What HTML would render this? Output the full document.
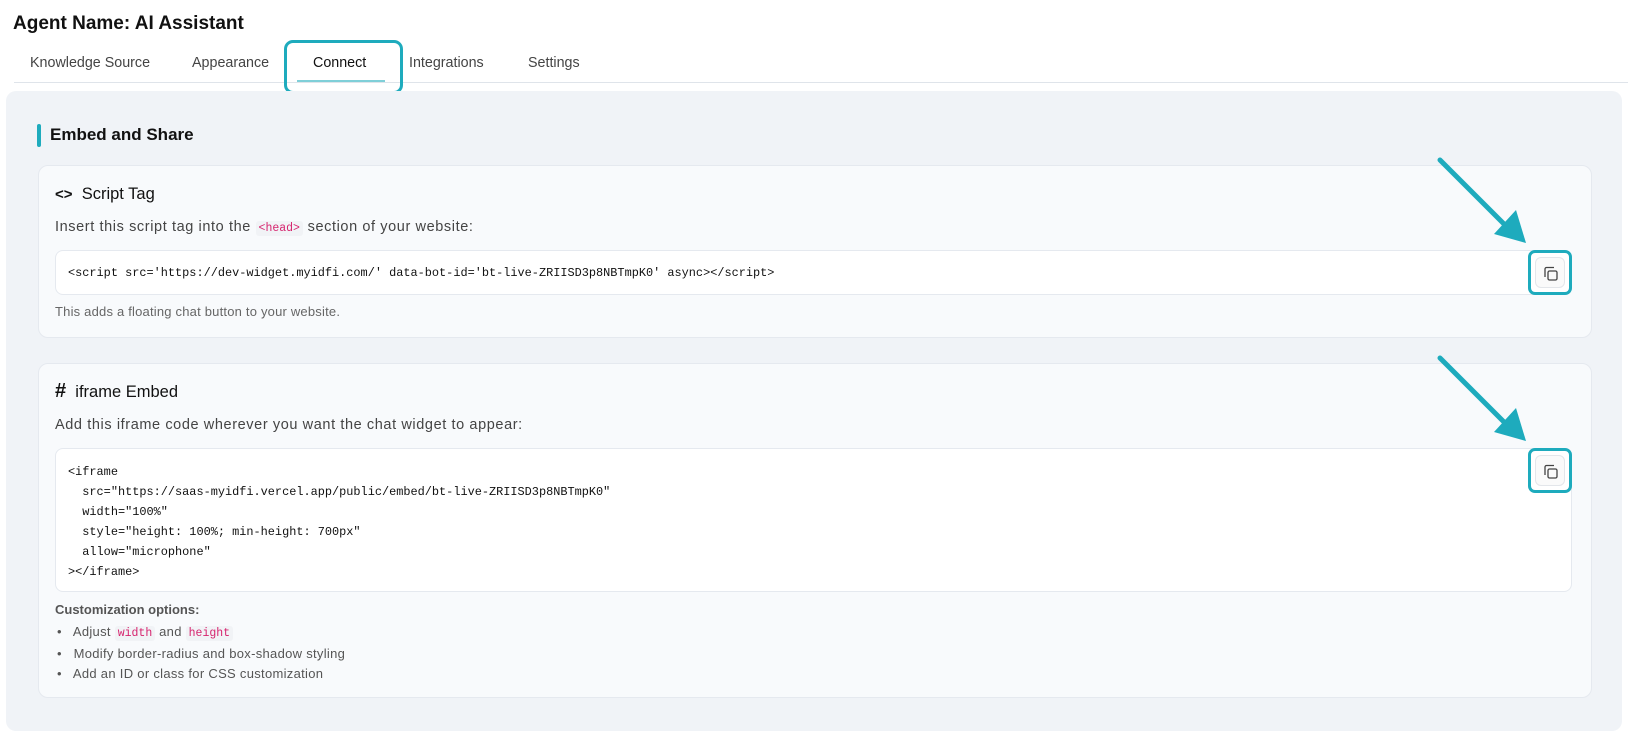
<!DOCTYPE html>
<html><head><meta charset="utf-8"><style>
*{margin:0;padding:0;box-sizing:border-box}
body{width:1628px;height:713px;overflow:hidden;background:#fff;font-family:"Liberation Sans",sans-serif;color:#111;position:relative}
.a{position:absolute;white-space:nowrap}
.tab{position:absolute;top:55px;font-size:14.3px;color:#444}
.mono{font-family:"Liberation Mono",monospace;font-size:11.9px;color:#111}
.card{position:absolute;left:38px;width:1554px;background:#f8fafc;border:1px solid #e5e9ef;border-radius:10px}
.code{position:absolute;left:55px;width:1517px;background:#fff;border:1px solid #e5e9ef;border-radius:8px}
.copy{position:absolute;left:1528px;width:44px;height:45px;border:3px solid #1eabbd;border-radius:7px;background:#fff}
.copy .in{position:absolute;left:4px;top:4px;width:30px;height:31px;border:1px solid #e3e6ea;border-radius:6px;background:#fafafa}
.pink{font-family:"Liberation Mono",monospace;color:#d6246e;background:#f1f3f6;padding:1px 3px;border-radius:3px;font-size:11.5px;letter-spacing:0}
.sm{font-size:14.5px;letter-spacing:0.6px;color:#444}
</style></head><body>
<div class="a" style="left:13px;top:13px;font-size:19px;font-weight:bold;color:#111">Agent Name: AI Assistant</div>
<div class="tab" style="left:30px">Knowledge Source</div>
<div class="tab" style="left:192px">Appearance</div>
<div class="tab" style="left:313px;color:#111">Connect</div>
<div class="tab" style="left:409px">Integrations</div>
<div class="tab" style="left:528px">Settings</div>
<div class="a" style="left:14px;top:82px;width:1614px;height:1px;background:#dfe4ea"></div>
<div class="a" style="left:297px;top:80px;width:88px;height:2px;background:#7fcfd8"></div>
<div class="a" style="left:284px;top:40px;width:119px;height:54px;border:3px solid #1eabbd;border-radius:9px"></div>
<div class="a" style="left:6px;top:91px;width:1616px;height:640px;background:#f0f3f7;border-radius:10px"></div>
<div class="a" style="left:37px;top:124px;width:4px;height:23px;background:#1eabbd;border-radius:2px"></div>
<div class="a" style="left:50px;top:125px;font-size:17px;font-weight:bold">Embed and Share</div>

<div class="card" style="top:165px;height:173px"></div>
<div class="a" style="left:55px;top:185px;font-size:16.5px"><span style="font-weight:bold;font-size:15px">&lt;&gt;</span>&nbsp; Script Tag</div>
<div class="a sm" style="left:55px;top:219px">Insert this script tag into the <span class="pink">&lt;head&gt;</span> section of your website:</div>
<div class="code" style="top:250px;height:45px"></div>
<div class="a mono" style="left:68px;top:266px">&lt;script src='https://dev-widget.myidfi.com/' data-bot-id='bt-live-ZRIISD3p8NBTmpK0' async&gt;&lt;/script&gt;</div>
<div class="a" style="left:55px;top:304px;font-size:13px;letter-spacing:0.2px;color:#666">This adds a floating chat button to your website.</div>

<div class="card" style="top:363px;height:335px"></div>
<div class="a" style="left:55px;top:383px;font-size:16.5px"><span style="font-size:20px;font-weight:bold;line-height:15px">#</span>&nbsp; iframe Embed</div>
<div class="a sm" style="left:55px;top:417px">Add this iframe code wherever you want the chat widget to appear:</div>
<div class="code" style="top:448px;height:144px"></div>
<div class="a mono" style="left:68px;top:462px;line-height:20px;white-space:pre">&lt;iframe
  src="https://saas-myidfi.vercel.app/public/embed/bt-live-ZRIISD3p8NBTmpK0"
  width="100%"
  style="height: 100%; min-height: 700px"
  allow="microphone"
&gt;&lt;/iframe&gt;</div>
<div class="a" style="left:55px;top:602px;font-size:13px;font-weight:bold;color:#555">Customization options:</div>
<div class="a" style="left:57px;top:622px;font-size:13px;letter-spacing:0.3px;line-height:20px;color:#555">•&nbsp;&nbsp; Adjust <span class="pink">width</span> and <span class="pink">height</span><br>•&nbsp;&nbsp; Modify border-radius and box-shadow styling<br>•&nbsp;&nbsp; Add an ID or class for CSS customization</div>

<div class="copy" style="top:250px"><div class="in"></div></div>
<div class="copy" style="top:448px"><div class="in"></div></div>
<svg class="a" style="left:0;top:0" width="1628" height="713">
<g fill="none" stroke="#444" stroke-width="1.3">
<rect x="1548" y="271" width="9" height="9" rx="1.5"/><path d="M1545 277 V269 a1.5 1.5 0 0 1 1.5 -1.5 H1554"/>
<rect x="1548" y="469" width="9" height="9" rx="1.5"/><path d="M1545 475 V467 a1.5 1.5 0 0 1 1.5 -1.5 H1554"/>
</g>
<g stroke="#1eabbd" stroke-width="5" stroke-linecap="round">
<line x1="1440" y1="160" x2="1506" y2="226"/>
<line x1="1440" y1="358" x2="1506" y2="424"/>
</g>
<polygon fill="#1eabbd" points="1526,243 1516,210 1494,234"/>
<polygon fill="#1eabbd" points="1526,441 1516,408 1494,432"/>
</svg>
</body></html>
